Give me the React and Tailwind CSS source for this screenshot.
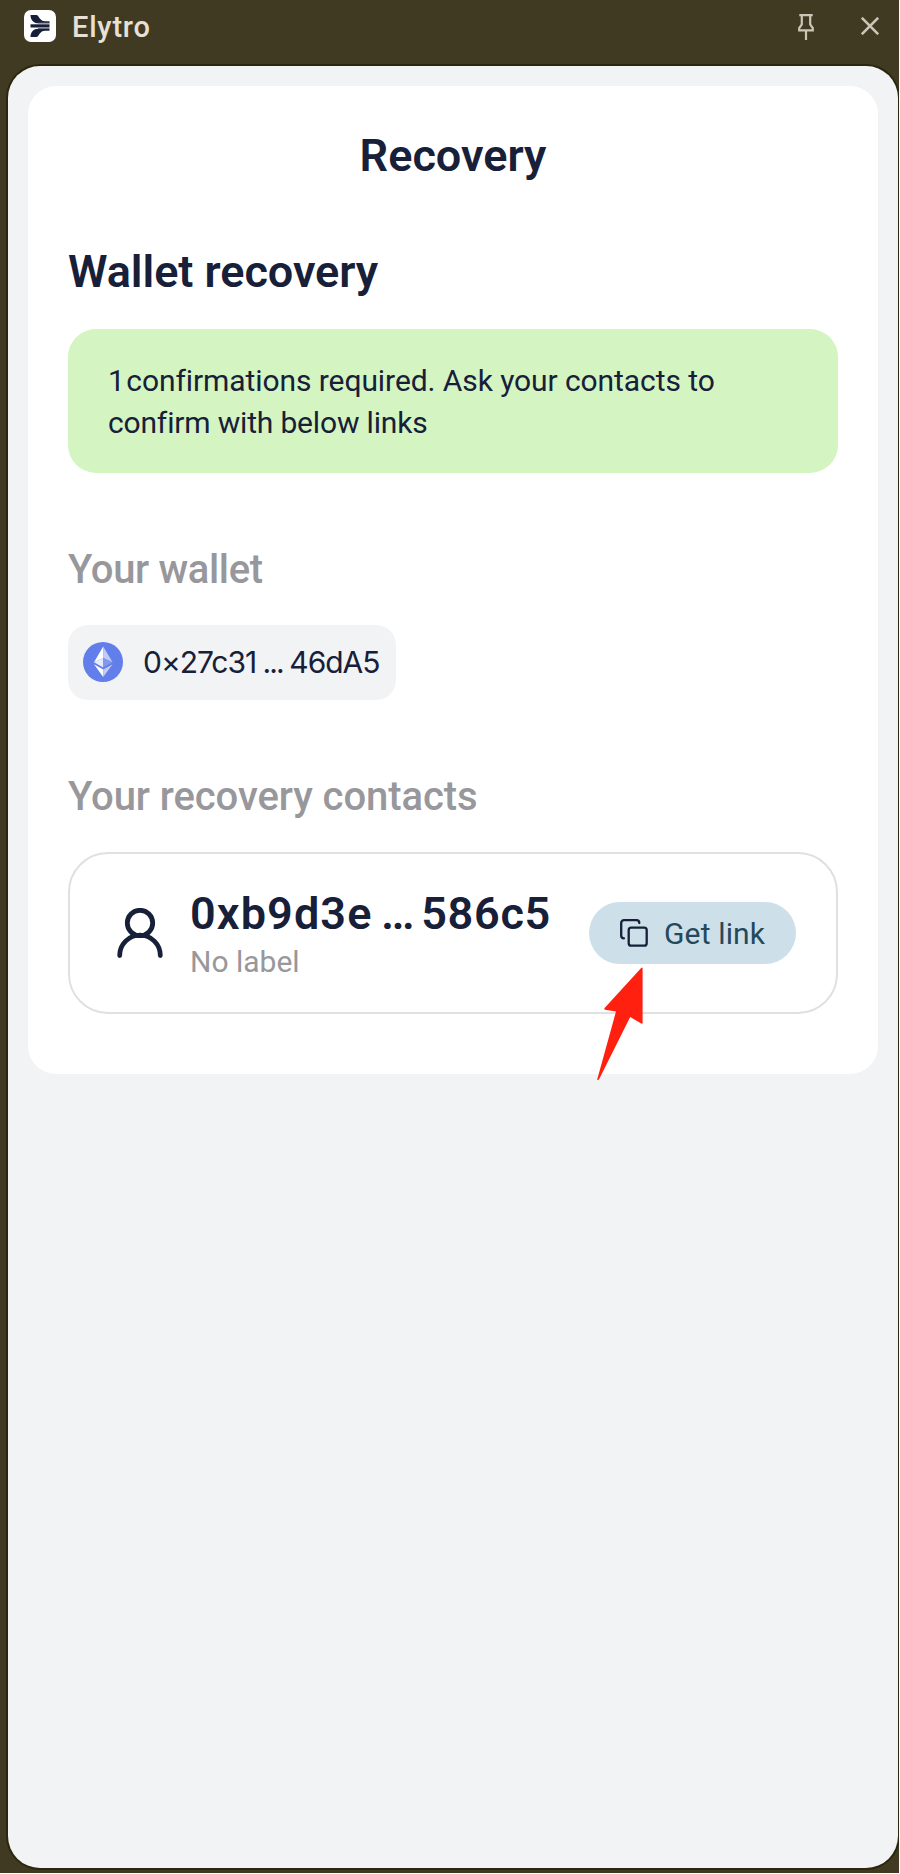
function Logo() {
  return (
    <svg className="size-8" viewBox="0 0 32 32">
      <rect width="32" height="32" rx="7" fill="#fff" />
      <path d="M6.500 5h5.500c2.300 0 2.500 2 4 3.800c1.500 1.700 3 2.500 5 2.500h4.500v2H14.500C9.500 13.300 6.500 10 6.500 5Z" fill="#172038" />
      <path d="M6.500 14.300h19v3.200h-19Z" fill="#172038" />
      <path d="M14 12.800h11.500v1H14ZM14 18h11.500v1H14Z" fill="#8b909c" />
      <path d="M6.500 27h5.500c2.300 0 2.500-2 4-3.800c1.500-1.700 3-2.500 5-2.500h4.500v-2H14.500C9.500 18.700 6.500 22 6.500 27Z" fill="#172038" />
    </svg>
  );
}

function Ethereum() {
  return (
    <svg className="size-10 shrink-0" viewBox="0 0 40 40">
      <circle cx="20" cy="20" r="20" fill="#627eea" />
      <path d="M20.200 4.500 11 20.200l9.200-4.200Z" fill="#fff" />
      <path d="M20.200 4.500v11.500l9.400 4.200Z" fill="#c1ccf7" />
      <path d="M11 20.200 20.200 25.500V16Z" fill="#e6eafc" />
      <path d="M20.200 16v9.500l9.400-5.300Z" fill="#8299ee" />
      <path d="M11 22.300 20.200 35v-7.400Z" fill="#fff" />
      <path d="M20.200 27.600V35l9.400-12.700Z" fill="#c1ccf7" />
    </svg>
  );
}

export default function App() {
  return (
    <div className="h-[1874px] w-[900px] bg-white font-['Roboto',sans-serif] text-[#172038]">
      <div className="flex h-[1873px] w-[899px] flex-col overflow-hidden bg-[#413a23]">
        <header className="flex h-16 shrink-0 items-center pr-5 pb-3 pl-6">
          <Logo />
          <span className="ml-4 pt-px text-[29px] leading-8 font-medium tracking-[0.8px] text-[#e8e0d4]">Elytro</span>
          <svg className="mt-0.5 ml-auto h-7 w-[18px]" viewBox="0 0 18 28" fill="none" stroke="#cfc4b8" strokeWidth="2.200">
            <path d="M2.300 2.200h13.400M4.800 2.500v9L2.200 15v2.300h13.600V15l-2.600-3.500v-9M9 17.500V27" />
          </svg>
          <svg className="ml-[46px] size-[18px]" viewBox="0 0 18 18" fill="none" stroke="#cfc4b8" strokeWidth="2.600">
            <path d="M.8.800l16.400 16.400M17.200.800.800 17.200" />
          </svg>
        </header>
        <div className="ml-1.5 flex h-[1806px] w-[894px] shrink-0 rounded-[34px] bg-[#2b260e] p-0.5">
          <main className="w-full rounded-[32px] bg-[#f1f3f5] px-5 pt-5">
            <section className="relative flex w-[850px] flex-col rounded-[28px] bg-white px-10 pt-[42px] pb-[60px]">
              <h1 className="text-center text-[45px] leading-[56px] font-semibold">Recovery</h1>
              <h2 className="mt-[60px] text-[45px] leading-[56px] font-semibold tracking-[-0.05px]">Wallet recovery</h2>
              <p className="mt-[29px] rounded-[28px] bg-[#d4f4c2] px-10 pt-[31px] pb-[29px] text-[30px] leading-[42px] tracking-[-0.08px]">
                <span className="tracking-[-3px]">1 </span>confirmations required. Ask your contacts to
                <br />
                <span className="tracking-[-0.17px]">confirm with below links</span>
              </p>
              <h3 className="mt-[73px] text-[40px] leading-[48px] font-medium tracking-[-0.35px] text-[#97979c]">Your wallet</h3>
              <div className="mt-[31px] flex h-[75px] w-[328px] items-center rounded-[20px] bg-[#f1f3f5] pb-px pl-[15px]">
                <Ethereum />
                <span className="ml-5 pb-px font-['Inter'] text-[30px] leading-10 tracking-[-1.05px] whitespace-nowrap">
                  0×27c31<span className="tracking-[-1.9px]"> ... </span>46dA5
                </span>
              </div>
              <h3 className="mt-[73px] text-[40px] leading-[48px] font-medium tracking-[-0.08px] text-[#97979c]">Your recovery contacts</h3>
              <div className="mt-[31px] flex h-[162px] items-center rounded-[40px] border-2 border-[#e0e0e0] pr-10 pl-[47px]">
                <svg className="h-[50px] w-[46px] shrink-0" viewBox="0 0 46 50" fill="none" stroke="#172038" strokeWidth="4.800" strokeLinecap="round">
                  <circle cx="23" cy="15" r="12.700" />
                  <path d="M2.700 47.500a20.300 20.300 0 0 1 40.600 0" />
                </svg>
                <div className="ml-[27px] pt-1.5">
                  <p className="text-[45px] leading-[50px] font-semibold tracking-[0.7px] whitespace-nowrap">
                    <span className="tracking-[1.100px]">0xb9d3e</span>
                    <span className="tracking-[-2.400px]"> ... </span>586c5
                  </p>
                  <p className="mt-0.5 text-[30px] leading-[42px] text-[#97979c]">No label</p>
                </div>
                <button className="ml-auto flex h-[62px] w-[207px] shrink-0 items-center rounded-full bg-[#cde0ea] pl-[31px] text-[30px] tracking-[0.15px] text-[#25495c]">
                  <svg className="size-7" viewBox="0 0 28 28" fill="none" stroke="#172038" strokeWidth="2.300" strokeLinecap="round" strokeLinejoin="round">
                    <rect x="8.700" y="8.700" width="18" height="18" rx="2.500" />
                    <path d="M4 19.300C2.200 19.300 1.200 18 1.200 16.500V4C1.200 2.300 2.300 1.200 4 1.200h12.500c1.700 0 2.800 1.200 2.800 2.800" />
                  </svg>
                  <span className="ml-4">Get link</span>
                </button>
              </div>
              <svg className="absolute top-[880px] left-[568px] h-[116px] w-[48px]" viewBox="0 0 48 116" fill="#ff2010">
                <path d="M46.600 2.500V57Q46.500 58.200 45.200 57.500L34.200 51 3.200 113Q2 115 1.200 113.500L20 45.500 9 43.800Q7.800 43 8.600 42L45.200 2Q46.600 1 46.600 2.500Z" />
              </svg>
            </section>
          </main>
        </div>
      </div>
    </div>
  );
}
